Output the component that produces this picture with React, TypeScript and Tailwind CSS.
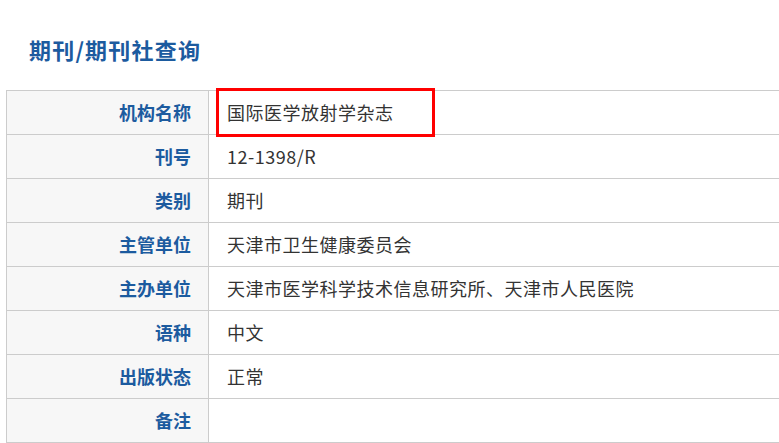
import React from "react"

const rows: [string, string][] = [
  ["机构名称", "国际医学放射学杂志"],
  ["刊号", "12-1398/R"],
  ["类别", "期刊"],
  ["主管单位", "天津市卫生健康委员会"],
  ["主办单位", "天津市医学科学技术信息研究所、天津市人民医院"],
  ["语种", "中文"],
  ["出版状态", "正常"],
  ["备注", ""],
]

export default function App() {
  return (
    <div
      className="w-[779px] h-[443px] bg-white overflow-hidden"
      style={{ fontFamily: '"Noto Sans CJK SC", "Noto Sans", sans-serif' }}
    >
      <h1 className="pt-[33px] pl-[29px] h-[65px] text-[22px] leading-[32px] tracking-[1.2px] font-bold text-[#1c5b9f]">
        期刊/期刊社查询
      </h1>
      <div className="mt-[25px] ml-[6px] w-[773px] border-t border-l border-[#cccccc]">
        {rows.map(([label, value], i) => (
          <div key={label} className="flex h-[44px] border-b border-[#cccccc]">
            <div className="w-[202px] shrink-0 bg-[#f7f7f7] border-r border-[#cccccc] flex items-center justify-end pr-[17px] text-[18px] font-bold text-[#1c5b9f]">
              {label}
            </div>
            <div className="relative flex-1 flex items-center pl-[18px] text-[18px] tracking-[0.5px] text-[#333333]">
              {value}
              {i === 0 && (
                <div className="absolute left-[7px] top-[-3px] w-[219px] h-[49px] border-[3px] border-[#ff0000]" />
              )}
            </div>
          </div>
        ))}
      </div>
    </div>
  )
}
